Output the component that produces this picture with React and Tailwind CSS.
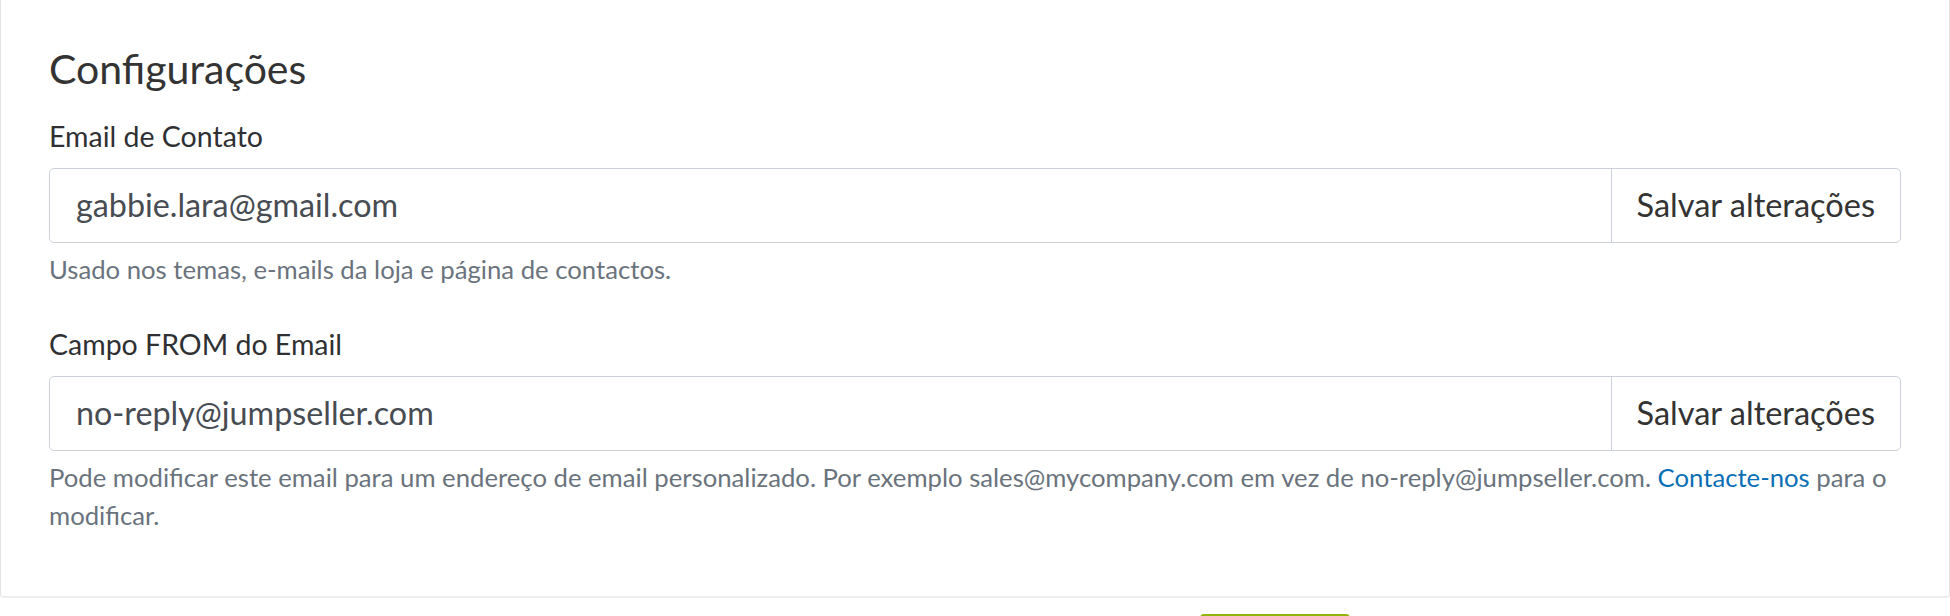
import React from "react";

const font = { fontFamily: "Lato, 'Noto Sans', sans-serif" };

function EmailField({ label, value, help }) {
	return (
		<div>
			<label className="block text-[28.5px] leading-[30px] text-[#2f3033]">{label}</label>
			<div className="mt-[17px] flex h-[75px] rounded-[5px] border border-[#ccd1d9] bg-white">
				<input
					type="text"
					defaultValue={value}
					className="min-w-0 flex-1 rounded-l-[5px] bg-transparent px-[26px] text-[32.3px] text-[#474c52] outline-none"
				/>
				<button
					type="button"
					className="shrink-0 border-l border-[#ccd1d9] px-[25px] text-[32.5px] text-[#333333]"
				>
					Salvar alterações
				</button>
			</div>
			<p className="mt-[7px] text-[25.7px] leading-[38px] text-[#6a737d]">{help}</p>
		</div>
	);
}

export default function App() {
	return (
		<div className="h-[616px] overflow-hidden bg-white" style={font}>
			{/* cartão de configurações */}
			<div className="rounded-b-[4px] border-x border-b-2 border-x-[#e4e4e4] border-b-[#eeeeee] bg-white px-[48px] pt-[45px] pb-[62px]">
				<h2 className="text-[41px] leading-[48px] text-[#333333]">Configurações</h2>
				<div className="mt-[28px] flex flex-col gap-[41px]">
					<EmailField
						label="Email de Contato"
						value="gabbie.lara@gmail.com"
						help="Usado nos temas, e-mails da loja e página de contactos."
					/>
					<EmailField
						label="Campo FROM do Email"
						value="no-reply@jumpseller.com"
						help={
							<>
								Pode modificar este email para um endereço de email personalizado. Por exemplo sales@mycompany.com em vez de no-reply@jumpseller.com.{" "}
								<a href="#" className="text-[#0a6fb5]">Contacte-nos</a> para o modificar.
							</>
						}
					/>
				</div>
			</div>
			<div className="flex pt-[16px] pl-[1200px]">
				<div className="h-[40px] w-[150px] rounded-t-[4px] bg-[#93b40a]" />
			</div>
		</div>
	);
}
